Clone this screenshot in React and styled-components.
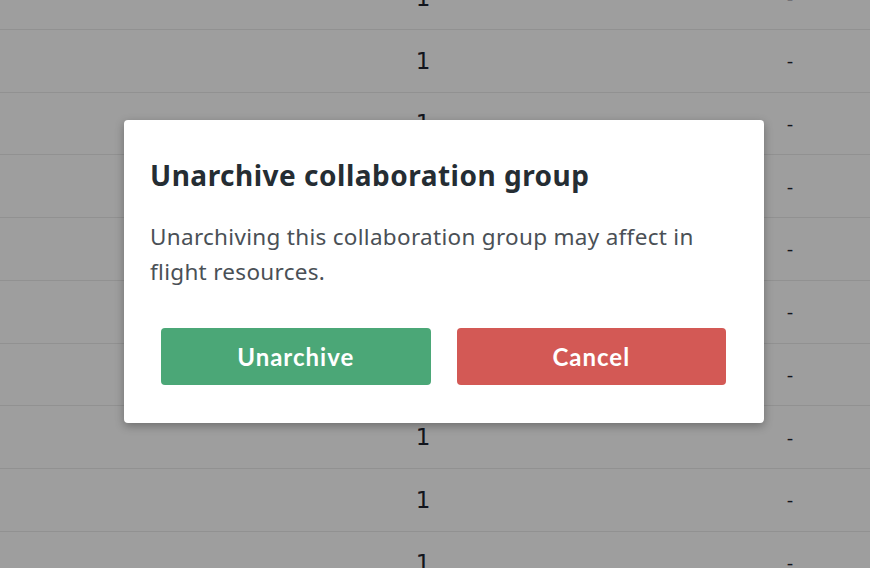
import React from "react";
import styled, { createGlobalStyle } from "styled-components";

const Global = createGlobalStyle`
  html, body { margin: 0; padding: 0; background: #ffffff; overflow: hidden; }
  body { width: 870px; height: 568px; }
`;

const Page = styled.div`
  position: relative;
  width: 870px;
  height: 568px;
  overflow: hidden;
  background: #ffffff;
`;

const Table = styled.div`
  margin-top: -33px;
  display: flex;
  flex-direction: column;
`;

const Row = styled.div`
  display: grid;
  grid-template-columns: 346px 154px 240px 100px 30px;
  height: 62.75px;
  box-sizing: border-box;
  border-bottom: 1.5px solid #ebebeb;
  align-items: center;
  font-family: "DejaVu Sans", sans-serif;
  color: #1e2230;
`;

const Cell = styled.div`
  text-align: center;
  font-size: ${(p) => (p.$small ? "18px" : "23px")};
`;

const Overlay = styled.div`
  position: absolute;
  inset: 0;
  background: rgba(0, 0, 0, 0.38);
  display: flex;
  align-items: flex-start;
  justify-content: center;
  padding: 120px 0 0 18px;
  box-sizing: border-box;
`;

const Modal = styled.div`
  width: 640px;
  height: 303px;
  box-sizing: border-box;
  background: #ffffff;
  border-radius: 4px;
  box-shadow: 0 3px 10px rgba(0, 0, 0, 0.3);
  padding: 38px 26px 38px;
  display: flex;
  flex-direction: column;
  font-family: "Noto Sans", sans-serif;
`;

const Title = styled.h2`
  margin: 0;
  font-size: 28px;
  line-height: 34px;
  font-weight: 700;
  letter-spacing: 0.5px;
  color: #252d33;
`;

const Body = styled.p`
  margin: 27px 0 0;
  font-size: 22.5px;
  line-height: 35px;
  letter-spacing: 0.3px;
  color: #4a5056;
`;

const Actions = styled.div`
  margin-top: auto;
  padding: 0 12px 0 11px;
  display: grid;
  grid-template-columns: 1fr 1fr;
  gap: 26px;
`;

const Button = styled.button`
  height: 57px;
  border: none;
  border-radius: 4px;
  background: ${(p) => (p.$variant === "danger" ? "#d35955" : "#4ba777")};
  color: #ffffff;
  font-family: "Lato", sans-serif;
  font-weight: 700;
  font-size: 24px;
  letter-spacing: 1px;
  cursor: pointer;
`;

const rows = Array.from({ length: 10 });

export default function App() {
  return (
    <Page>
      <Global />
      <Table>
        {rows.map((_, i) => (
          <Row key={i}>
            <Cell />
            <Cell>1</Cell>
            <Cell />
            <Cell $small>-</Cell>
            <Cell />
          </Row>
        ))}
      </Table>
      <Overlay>
        <Modal role="dialog">
          <Title>Unarchive collaboration group</Title>
          <Body>
            Unarchiving this collaboration group may affect in flight resources.
          </Body>
          <Actions>
            <Button>Unarchive</Button>
            <Button $variant="danger">Cancel</Button>
          </Actions>
        </Modal>
      </Overlay>
    </Page>
  );
}
